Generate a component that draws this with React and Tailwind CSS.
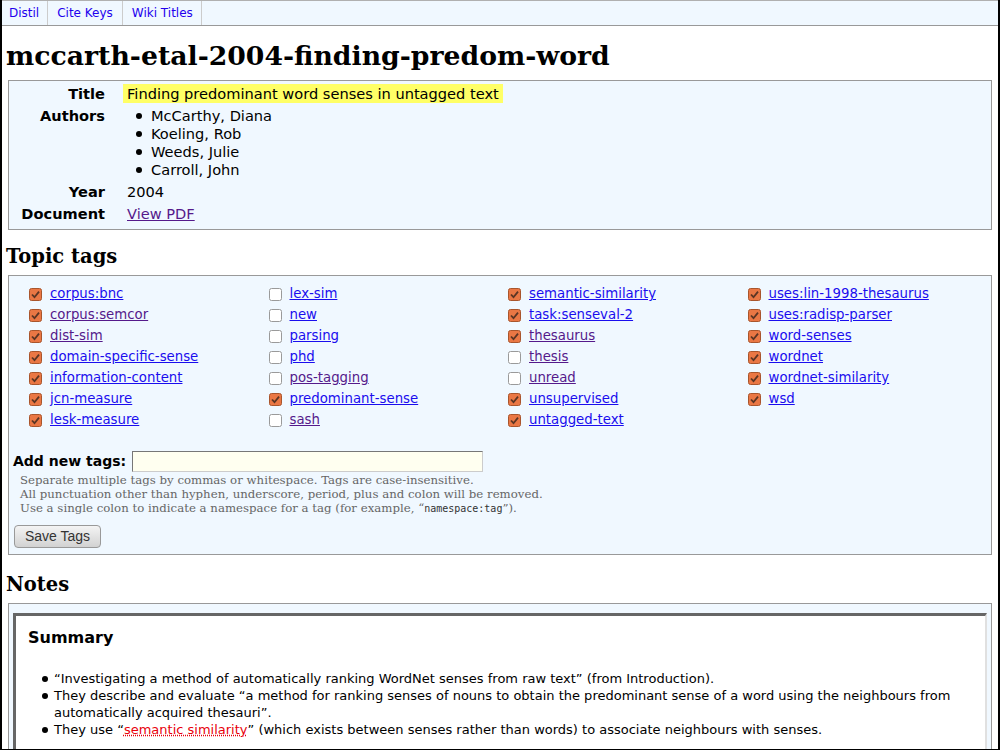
import React from "react";

const tags = [
  ["corpus:bnc", true, false],
  ["corpus:semcor", true, true],
  ["dist-sim", true, true],
  ["domain-specific-sense", true, false],
  ["information-content", true, false],
  ["jcn-measure", true, false],
  ["lesk-measure", true, false],
  ["lex-sim", false, false],
  ["new", false, false],
  ["parsing", false, false],
  ["phd", false, false],
  ["pos-tagging", false, true],
  ["predominant-sense", true, false],
  ["sash", false, true],
  ["semantic-similarity", true, false],
  ["task:senseval-2", true, false],
  ["thesaurus", true, true],
  ["thesis", false, true],
  ["unread", false, true],
  ["unsupervised", true, false],
  ["untagged-text", true, false],
  ["uses:lin-1998-thesaurus", true, false],
  ["uses:radisp-parser", true, false],
  ["word-senses", true, false],
  ["wordnet", true, false],
  ["wordnet-similarity", true, false],
  ["wsd", true, false],
];

function Box({ checked }) {
  if (checked) {
    return (
      <svg width="13" height="13" viewBox="0 0 13 13" className="shrink-0">
        <rect x="0.5" y="0.5" width="12" height="12" rx="2" fill="#ea7744" stroke="#a9552c" />
        <path d="M3 6.5 L5.5 9.2 L10 3.6" fill="none" stroke="#5b3524" strokeWidth="1.8" />
      </svg>
    );
  }
  return (
    <svg width="13" height="13" viewBox="0 0 13 13" className="shrink-0">
      <rect x="0.5" y="0.5" width="12" height="12" rx="2" fill="#ffffff" stroke="#9a9a9a" />
    </svg>
  );
}

const sans = { fontFamily: '"DejaVu Sans", sans-serif' };
const serif = { fontFamily: '"DejaVu Serif", serif' };

export default function App() {
  return (
    <div
      className="w-[1000px] h-[750px] overflow-hidden bg-white border-l-2 border-r-2 border-b border-black text-black"
      style={sans}
    >
      <div className="h-[26px] bg-[#f0f8ff] border-t border-t-[#b0b0b0] border-b border-b-[#999] flex text-[12px] leading-[25px]">
        <a className="pl-[7px] pr-[8px] text-[#2200ee] border-r border-[#ccc]">Distil</a>
        <a className="px-[9px] text-[#2200ee] border-r border-[#ccc]">Cite Keys</a>
        <a className="pl-[9px] pr-[8px] text-[#2200ee] border-r border-[#ccc]">Wiki Titles</a>
      </div>

      <h1 className="mt-[14px] ml-[4px] text-[26.7px] leading-[32px] font-bold" style={serif}>
        mccarth-etal-2004-finding-predom-word
      </h1>

      <div className="mt-[8px] mx-[6px] bg-[#f0f8ff] border border-[#999] pt-[2px] pb-[4px] text-[14.6px] leading-[18px]">
        <div className="flex py-[2px]">
          <div className="w-[96px] text-right font-bold">Title</div>
          <div className="ml-[18px]">
            <span className="bg-[#ffff66] px-[4px] py-[1px]">Finding predominant word senses in untagged text</span>
          </div>
        </div>
        <div className="flex py-[2px]">
          <div className="w-[96px] text-right font-bold">Authors</div>
          <ul className="ml-[22px]">
            {["McCarthy, Diana", "Koeling, Rob", "Weeds, Julie", "Carroll, John"].map((a) => (
              <li key={a} className="flex items-center">
                <span className="w-[6px] h-[6px] rounded-full bg-black mr-[9px] ml-[9px]" />
                {a}
              </li>
            ))}
          </ul>
        </div>
        <div className="flex py-[2px]">
          <div className="w-[96px] text-right font-bold">Year</div>
          <div className="ml-[22px]">2004</div>
        </div>
        <div className="flex py-[2px]">
          <div className="w-[96px] text-right font-bold">Document</div>
          <div className="ml-[22px]">
            <a className="text-[#551a8b] underline">View PDF</a>
          </div>
        </div>
      </div>

      <h2 className="mt-[15px] ml-[4px] text-[19.5px] leading-[24px] font-bold" style={serif}>
        Topic tags
      </h2>

      <div className="mt-[6px] mx-[6px] bg-[#f0f8ff] border border-[#999] pt-[9px] pb-[6px] text-[14px]">
        <div className="grid grid-cols-4 grid-rows-7 grid-flow-col ml-[20px] mr-[4px] gap-y-[3px] text-[13.3px]">
          {tags.map(([name, checked, visited]) => (
            <div key={name} className="flex items-center h-[18px] leading-[18px]">
              <Box checked={checked} />
              <a className={"ml-[8px] underline " + (visited ? "text-[#551a8b]" : "text-[#1a0dee]")}>{name}</a>
            </div>
          ))}
        </div>

        <div className="mt-[22px] ml-[4px] flex items-center">
          <span className="font-bold">Add new tags:</span>
          <div className="ml-[6px] w-[351px] h-[21px] bg-[#fffff0] border border-[#ccc] border-t-[#777] border-l-[#777]" />
        </div>
        <div className="ml-[11px] mt-[1px] text-[11.75px] leading-[14px] text-[#666]" style={serif}>
          <div>Separate multiple tags by commas or whitespace. Tags are case-insensitive.</div>
          <div>All punctuation other than hyphen, underscore, period, plus and colon will be removed.</div>
          <div>
            Use a single colon to indicate a namespace for a tag (for example, “
            <span className="text-[10px] text-[#333]" style={{ fontFamily: '"DejaVu Sans Mono", monospace' }}>
              namespace:tag
            </span>
            ”).
          </div>
        </div>
        <button
          className="mt-[9px] ml-[5px] w-[87px] h-[23px] rounded-[4px] border border-[#999] bg-gradient-to-b from-[#f4f4f4] to-[#d2d2d2] text-[14px] text-[#333]"
          style={{ fontFamily: '"Liberation Sans", sans-serif' }}
        >
          Save Tags
        </button>
      </div>

      <h2 className="mt-[18px] ml-[4px] text-[19.5px] leading-[24px] font-bold" style={serif}>
        Notes
      </h2>

      <div className="mt-[6px] mx-[6px] bg-[#f0f8ff] border border-[#999] pt-[9px] px-[4px] h-[200px]">
        <div className="bg-white border-t-[3px] border-l-[3px] border-t-[#666] border-l-[#666] border-r-2 border-r-[#e0e0e0] h-[200px] pl-[12px] pr-[4px] pt-[12px]">
          <h3 className="text-[16px] leading-[19px] font-bold">Summary</h3>
          <ul className="mt-[23px] text-[13px] leading-[17px]">
            <li className="flex">
              <span className="w-[6px] h-[6px] rounded-full bg-black mt-[6px] ml-[14px] mr-[6px] shrink-0" />
              <span>“Investigating a method of automatically ranking WordNet senses from raw text” (from Introduction).</span>
            </li>
            <li className="flex">
              <span className="w-[6px] h-[6px] rounded-full bg-black mt-[6px] ml-[14px] mr-[6px] shrink-0" />
              <span>
                They describe and evaluate “a method for ranking senses of nouns to obtain the predominant sense of a word using the neighbours from automatically acquired thesauri”.
              </span>
            </li>
            <li className="flex">
              <span className="w-[6px] h-[6px] rounded-full bg-black mt-[6px] ml-[14px] mr-[6px] shrink-0" />
              <span>
                They use “
                <span className="text-[#e8000b] underline decoration-dotted decoration-[#e8000b]">semantic similarity</span>
                ” (which exists between senses rather than words) to associate neighbours with senses.
              </span>
            </li>
          </ul>
        </div>
      </div>
    </div>
  );
}
